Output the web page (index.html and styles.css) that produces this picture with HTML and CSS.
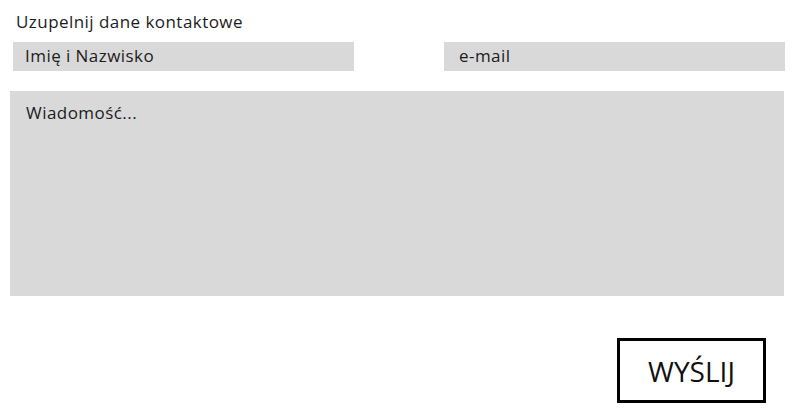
FILE: index.html
```html
<!DOCTYPE html>
<html lang="pl">
<head>
<meta charset="utf-8">
<title>Kontakt</title>
<link rel="stylesheet" href="styles.css">
</head>
<body>
<form class="contact">
  <p class="title">Uzupelnij dane kontaktowe</p>
  <div class="row">
    <div class="field field-name">Imię i Nazwisko</div>
    <div class="field field-mail">e-mail</div>
  </div>
  <div class="message">Wiadomość...</div>
  <div class="actions">
    <div class="send">WYŚLIJ</div>
  </div>
</form>
</body>
</html>
```
FILE: styles.css
```css
html, body {
  margin: 0;
  padding: 0;
  background: #ffffff;
}
body {
  font-family: "Open Sans", "DejaVu Sans", sans-serif;
  font-weight: 400;
  color: #1c1c1c;
  width: 797px;
  height: 419px;
  overflow: hidden;
}
.contact {
  display: flex;
  flex-direction: column;
}
.title {
  margin: 0;
  padding: 11px 0 0 16px;
  font-size: 17px;
  letter-spacing: 0.45px;
  line-height: 22px;
  height: 30px;
  box-sizing: border-box;
}
.row {
  display: flex;
  justify-content: space-between;
  padding: 12px 12px 0 13px;
}
.field {
  width: 341px;
  height: 29px;
  background: #d9d9d9;
  font-size: 17px;
  letter-spacing: 0.45px;
  line-height: 27px;
  box-sizing: border-box;
}
.field-name {
  padding-left: 12px;
}
.field-mail {
  padding-left: 15px;
}
.message {
  margin: 20px 0 0 10px;
  width: 774px;
  height: 205px;
  background: #d9d9d9;
  font-size: 17px;
  letter-spacing: 0.45px;
  line-height: 22px;
  padding: 11px 0 0 16px;
  box-sizing: border-box;
}
.actions {
  display: flex;
  justify-content: flex-end;
  padding: 42px 31px 0 0;
}
.send {
  width: 149px;
  height: 65px;
  border: 3px solid #000;
  box-sizing: border-box;
  display: flex;
  align-items: center;
  justify-content: center;
  font-size: 28px;
  color: #111;
}
```
